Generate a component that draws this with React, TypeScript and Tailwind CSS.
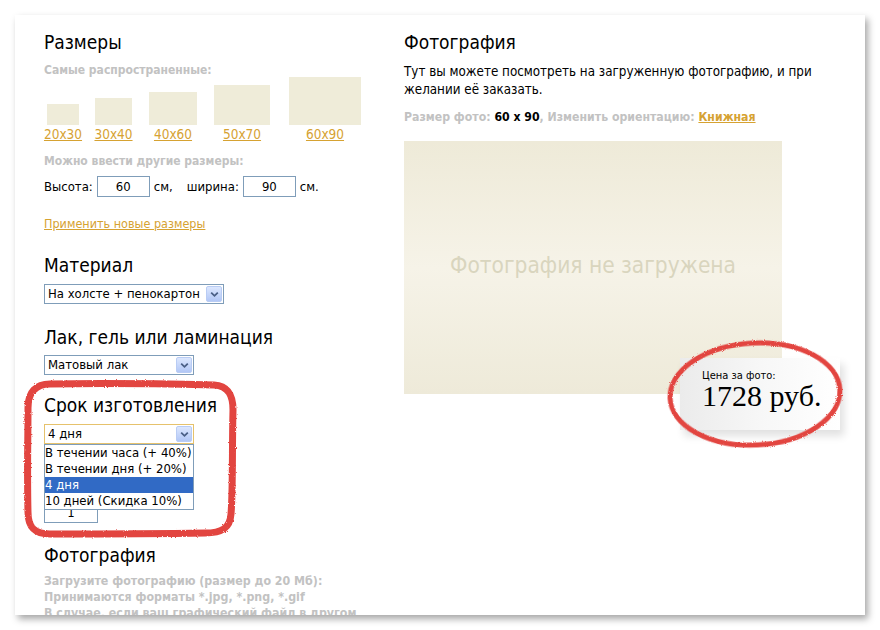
import React from 'react';

const sans = "font-['DejaVu_Sans_Condensed','DejaVu_Sans',sans-serif]";

const Arrow = () => (
  <div className="w-[16px] h-[16px] rounded-[2px] border border-[#b9ccf4] bg-gradient-to-b from-[#dce7fe] to-[#b2c7f6] flex items-center justify-center">
    <svg width="9" height="7" viewBox="0 0 9 7">
      <path d="M1.2 1.6 L4.5 4.8 L7.8 1.6" stroke="#4a5f86" strokeWidth="1.8" fill="none" />
    </svg>
  </div>
);

const Select = ({ value, w, focus }: { value: string; w: string; focus?: boolean }) => (
  <div
    className={`${w} ${focus ? 'border-[#e6c26c]' : 'border-[#7f9db9]'} h-[20px] border bg-white flex items-center justify-between pl-[3px] pr-[1px] text-[13px] text-black`}
  >
    <span>{value}</span>
    <Arrow />
  </div>
);

const Heading = ({ children, className = '' }: { children: React.ReactNode; className?: string }) => (
  <h2 className={`text-[19px] leading-[22px] text-black font-normal ${className}`}>{children}</h2>
);

const sizes = [
  { label: '20x30', box: 'w-[32px] h-[21px]', col: 'w-[38px] ml-0' },
  { label: '30x40', box: 'w-[37px] h-[27px]', col: 'w-[39px] ml-[12px]' },
  { label: '40x60', box: 'w-[48px] h-[33px]', col: 'w-[48px] ml-[16px]' },
  { label: '50x70', box: 'w-[56px] h-[40px]', col: 'w-[56px] ml-[17px]' },
  { label: '60x90', box: 'w-[72px] h-[48px]', col: 'w-[72px] ml-[19px]' },
];

const options = ['В течении часа (+ 40%)', 'В течении дня (+ 20%)', '4 дня', '10 дней (Скидка 10%)'];

export default function App() {
  return (
    <div className={`relative w-[880px] h-[630px] bg-white overflow-hidden ${sans}`}>
      <div className="ml-[15px] mt-[15px] w-[850px] h-[600px] bg-white overflow-hidden shadow-[3px_4px_7px_rgba(0,0,0,0.35)] flex">
        {/* left column */}
        <div className="w-[389px] pl-[29px] pt-[16px] shrink-0">
          <Heading>Размеры</Heading>
          <p className="mt-[10px] text-[12px] leading-[14px] font-bold text-[#c2c2c2]">Самые распространенные:</p>
          <div className="flex items-end">
            {sizes.map((s) => (
              <div key={s.label} className={`${s.col} flex flex-col items-center`}>
                <div className={`${s.box} bg-[#efecd9]`} />
                <a className="mt-[2px] text-[13.5px] leading-[15px] text-[#d6a232] underline">{s.label}</a>
              </div>
            ))}
          </div>
          <p className="mt-[12px] text-[12px] leading-[14px] font-bold text-[#c2c2c2]">Можно ввести другие размеры:</p>
          <div className="mt-[8px] flex items-center text-[13px] text-black">
            <span>Высота:</span>
            <div className="ml-[4px] w-[53px] h-[21px] border border-[#7f9db9] flex items-center justify-center">60</div>
            <span className="ml-[4px]">см,</span>
            <span className="ml-[14px]">ширина:</span>
            <div className="ml-[4px] w-[53px] h-[21px] border border-[#7f9db9] flex items-center justify-center">90</div>
            <span className="ml-[4px]">см.</span>
          </div>
          <a className="block mt-[19px] text-[12.5px] leading-[15px] text-[#d6a232] underline">Применить новые размеры</a>

          <Heading className="mt-[23px]">Материал</Heading>
          <div className="mt-[8px]">
            <Select value="На холсте + пенокартон" w="w-[180px]" />
          </div>

          <Heading className="mt-[22px]">Лак, гель или ламинация</Heading>
          <div className="mt-[7px]">
            <Select value="Матовый лак" w="w-[150px]" />
          </div>

          <Heading className="mt-[19px]">Срок изготовления</Heading>
          <div className="mt-[8px] relative w-[150px] z-10">
            <Select value="4 дня" w="w-[150px]" focus />
            <div className="absolute left-0 top-full w-[150px] border border-[#7f9db9] bg-white text-[13px] leading-[16px] text-black">
              {options.map((o) => (
                <div key={o} className={o === '4 дня' ? 'bg-[#316ac5] text-white' : ''}>{o}</div>
              ))}
            </div>
          </div>
          <div className="mt-[58px] w-[54px] h-[21px] border border-[#7f9db9] flex items-center justify-center text-[13px]">1</div>

          <Heading className="mt-[21px]">Фотография</Heading>
          <div className="mt-[7px] text-[12.3px] leading-[16px] font-bold text-[#c2c2c2]">
            <p>Загрузите фотографию (размер до 20 Мб):</p>
            <p>Принимаются форматы *.jpg, *.png, *.gif</p>
            <p>В случае, если ваш графический файл в другом</p>
          </div>
        </div>

        {/* right column */}
        <div className="pt-[16px] flex-1">
          <Heading>Фотография</Heading>
          <p className="mt-[10px] text-[13.3px] leading-[18px] text-black whitespace-nowrap">
            Тут вы можете посмотреть на загруженную фотографию, и при
            <br />
            желании её заказать.
          </p>
          <p className="mt-[10px] text-[12.2px] leading-[16px] font-bold text-[#c2c2c2] whitespace-nowrap">
            Размер фото: <span className="text-black">60 x 90</span>, Изменить ориентацию:{' '}
            <a className="text-[#d6a232] underline">Книжная</a>
          </p>
          <div className="mt-[16px] w-[378px] h-[253px] bg-gradient-to-b from-[#eeead8] via-[#f6f3e8] to-[#eeead9] flex items-center justify-center pb-[4px]">
            <span className="text-[22.5px] text-[#d9d5be]">Фотография не загружена</span>
          </div>
        </div>
      </div>

      {/* price tag */}
      <div className="absolute left-[680px] top-[358px] w-[160px] h-[72px] bg-gradient-to-r from-[#ebebeb] via-[#f7f7f7] to-white shadow-[4px_6px_8px_rgba(0,0,0,0.12)] pl-[22px] pt-[11px]">
        <p className="text-[11px] leading-[13px] text-black">Цена за фото:</p>
        <p className="font-['Liberation_Serif',serif] text-[30px] leading-[28px] text-black">1728 руб.</p>
      </div>

      {/* hand-drawn marks */}
      <svg className="absolute left-0 top-0 pointer-events-none" width="880" height="630">
        <defs>
          <filter id="rough" x="-10%" y="-10%" width="120%" height="120%">
            <feTurbulence type="fractalNoise" baseFrequency="0.9" numOctaves="2" seed="3" />
            <feDisplacementMap in="SourceGraphic" scale="2.5" />
          </filter>
        </defs>
        <g filter="url(#rough)" fill="none" stroke="#e2443f" strokeLinecap="round">
          <path
            d="M50 384 C 110 383, 170 384, 214 385 C 229 386, 233 396, 233 410 C 232 450, 233 490, 231 514 C 230 528, 222 533, 205 533 C 150 534, 90 534, 50 534 C 35 534, 28 528, 28 512 C 27 470, 28 440, 28 408 C 28 392, 36 384, 50 384 Z"
            strokeWidth="7"
          />
          <ellipse cx="755" cy="394" rx="85" ry="51" strokeWidth="5" transform="rotate(-3 755 394)" />
        </g>
      </svg>
    </div>
  );
}
